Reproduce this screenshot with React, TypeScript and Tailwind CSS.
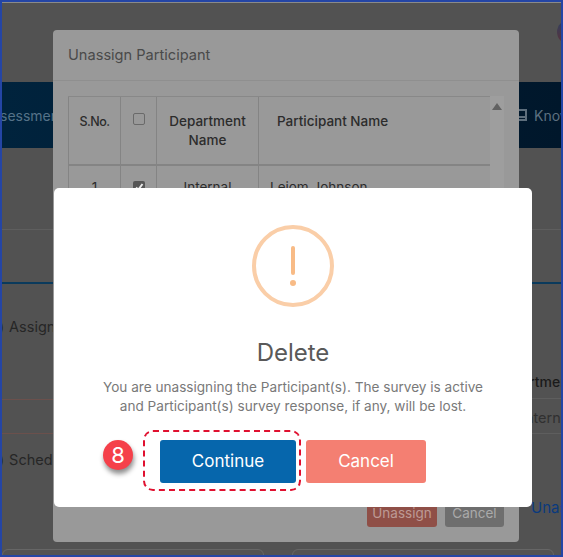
export default function App() {
  const font = "font-['Inter','Noto_Sans',sans-serif]";
  return (
    <div className={`relative w-[563px] h-[557px] overflow-hidden box-border border-2 border-[#2445a5] bg-[#525252] ${font}`}>
      {/* Dimmed page underneath */}
      <div className="h-[1px] bg-[#8a8a8a]" />
      <div className="h-[79px] flex justify-end items-start pt-[17px]">
        <div className="w-[24px] h-[24px] rounded-full bg-linear-to-b from-[#2a3f60] to-[#5a2f38] mr-[-20px] shrink-0" />
      </div>
      <div className="h-[66px] bg-linear-to-r from-[#00233d] to-[#00172b] flex justify-between items-center text-[14px] text-[#557288] whitespace-nowrap">
        <span className="ml-[-2px] w-[60px] overflow-hidden">sessment</span>
        <div className="flex items-center gap-[7px] w-[44px] ml-auto shrink-0 text-[#5d7080]">
          <div className="w-[10px] h-[12px] border-2 border-[#5d6e7c] shrink-0 flex items-end">
            <div className="w-full h-[2px] mb-[1px] bg-[#5d6e7c]" />
          </div>
          <span>Know</span>
        </div>
      </div>
      <div className="h-[82px] border-b border-[#5e5e5e]" />
      <div className="h-[54px] border-b-2 border-[#0a3a5c]" />
      <div className="flex justify-between h-[265px] text-[14px] text-[#262626] whitespace-nowrap">
        <div className="w-[60px] flex flex-col">
          <div className="pt-[32px] h-[115px] ml-[-3px] flex gap-[5px]">
            <span>)</span>
            <span className="text-[14.5px]">Assigned</span>
          </div>
          <div className="h-[35px] border-y border-[#6b504c]" />
          <div className="pt-[15px] ml-[-3px] flex gap-[5px]">
            <span>)</span>
            <span className="text-[14.5px]">Schedule</span>
          </div>
        </div>
        <div className="w-[71px] flex flex-col shrink-0">
          <div className="pt-[87px] h-[114px] font-medium text-[#1a1a1a] pl-[4px]">Department</div>
          <div className="h-[36px] border-y border-[#5e5e5e] pl-[31px] pt-[8px] text-[14.5px] text-[#303030]">Internal</div>
          <div className="pt-[63px] pl-[41px] text-[15px] text-[#0a3a7e]">Unassign</div>
        </div>
      </div>
      <div className="flex gap-[28px] h-[10px]">
        <div className="w-[262px] h-[10px] rounded-t-[6px] border border-[#666666]" />
        <div className="w-[262px] h-[10px] rounded-t-[6px] border border-[#666666]" />
      </div>

      {/* Back modal */}
      <div className="absolute left-[51px] top-[28px] w-[466px] h-[512px] rounded-[4px] bg-[#999999] flex flex-col">
        <div className="h-[51px] shrink-0 border-b border-[#8f8f8f] px-[15px] pt-[2px] flex items-center text-[14.6px] text-[#4a4a4a]">
          Unassign Participant
        </div>
        <div className="flex pl-[15px] pt-[15px]">
          <div className="grid grid-cols-[53px_36px_102px_231px] grid-rows-[69px_40px] border-t border-[#888888] text-[13.5px] font-medium text-[#2c2c2c] leading-[19px]">
            <div className="border-x border-b-2 border-[#848484] flex justify-center pt-[15px] text-[12.5px] tracking-[-0.5px]">S.No.</div>
            <div className="border-r border-b-2 border-[#848484] flex justify-center pt-[16px]">
              <div className="w-[12px] h-[12px] rounded-[2px] border border-[#6a6a6a]" />
            </div>
            <div className="border-r border-b-2 border-[#848484] text-center pt-[15px]">
              Department
              <br />
              Name
            </div>
            <div className="border-b-2 border-[#848484] pl-[18px] pt-[15px]">Participant Name</div>
            <div className="border-x border-[#848484] text-center pt-[12px] font-normal">1</div>
            <div className="border-r border-[#848484] flex justify-center pt-[15px]">
              <div className="w-[12px] h-[12px] rounded-[2px] bg-[#555555] flex items-center justify-center">
                <svg viewBox="0 0 12 12" className="w-[12px] h-[12px]" fill="none" stroke="#e8e8e8" strokeWidth="2">
                  <path d="M3 6.5 L5.2 8.8 L9.5 3" />
                </svg>
              </div>
            </div>
            <div className="border-r border-[#848484] text-center pt-[12px] font-normal">Internal</div>
            <div className="pl-[11px] pt-[12px] font-normal">Leiom Johnson</div>
          </div>
          <div className="w-[14px] h-[110px] bg-[#9e9e9e] flex justify-center pt-[7px]">
            <div className="w-0 h-0 border-x-[5px] border-x-transparent border-b-[7px] border-b-[#626262]" />
          </div>
        </div>
        <div className="mt-auto flex justify-end gap-[8px] pr-[15px] pb-[15px] text-[13.5px]">
          <div className="w-[70px] h-[28px] rounded-[3px] bg-[#8f4f47] text-[#bd9a95] flex items-center justify-center">Unassign</div>
          <div className="w-[59px] h-[28px] rounded-[3px] bg-[#6e6e6e] text-[#aaaaaa] flex items-center justify-center">Cancel</div>
        </div>
      </div>

      {/* Front modal */}
      <div className="absolute left-[52px] top-[186px] w-[478px] h-[319px] rounded-[5px] bg-white flex flex-col items-center pt-[37px]">
        <div className="w-[82px] h-[82px] shrink-0 rounded-full border-[4px] border-[#facea8] flex flex-col items-center pt-[17px]">
          <div className="w-[4px] h-[29px] bg-[#f8bb86] rounded-[2px]" />
          <div className="w-[6px] h-[6px] mt-[5px] rounded-full bg-[#f8bb86]" />
        </div>
        <div className="mt-[30px] text-[24px] leading-[32px] text-[#595959]">Delete</div>
        <div className="mt-[9px] text-[13.6px] leading-[19px] text-[#797979] text-center whitespace-nowrap">
          You are unassigning the Participant(s). The survey is active
          <br />
          and Participant(s) survey response, if any, will be lost.
        </div>
        <div className="mt-[14px] w-full pl-[89px] flex items-start text-[17px] text-white">
          <div className="relative w-[158px] h-[61px] shrink-0 rounded-[10px] border-2 border-dashed border-[#e0102f] pl-[15px] pt-[8px]">
            <div className="w-[136px] h-[43px] rounded-[3px] bg-[#0666ac] flex items-center justify-center">Continue</div>
            <div className="absolute left-[-42px] top-[8px] w-[30px] h-[30px] rounded-full bg-[#f5404a] flex items-center justify-center text-[22px] shadow-[1px_4px_5px_rgba(0,0,0,0.45)]">8</div>
          </div>
          <div className="ml-[5px] mt-[10px] w-[120px] h-[43px] rounded-[3px] bg-[#f47f72] flex items-center justify-center">Cancel</div>
        </div>
      </div>
    </div>
  );
}
